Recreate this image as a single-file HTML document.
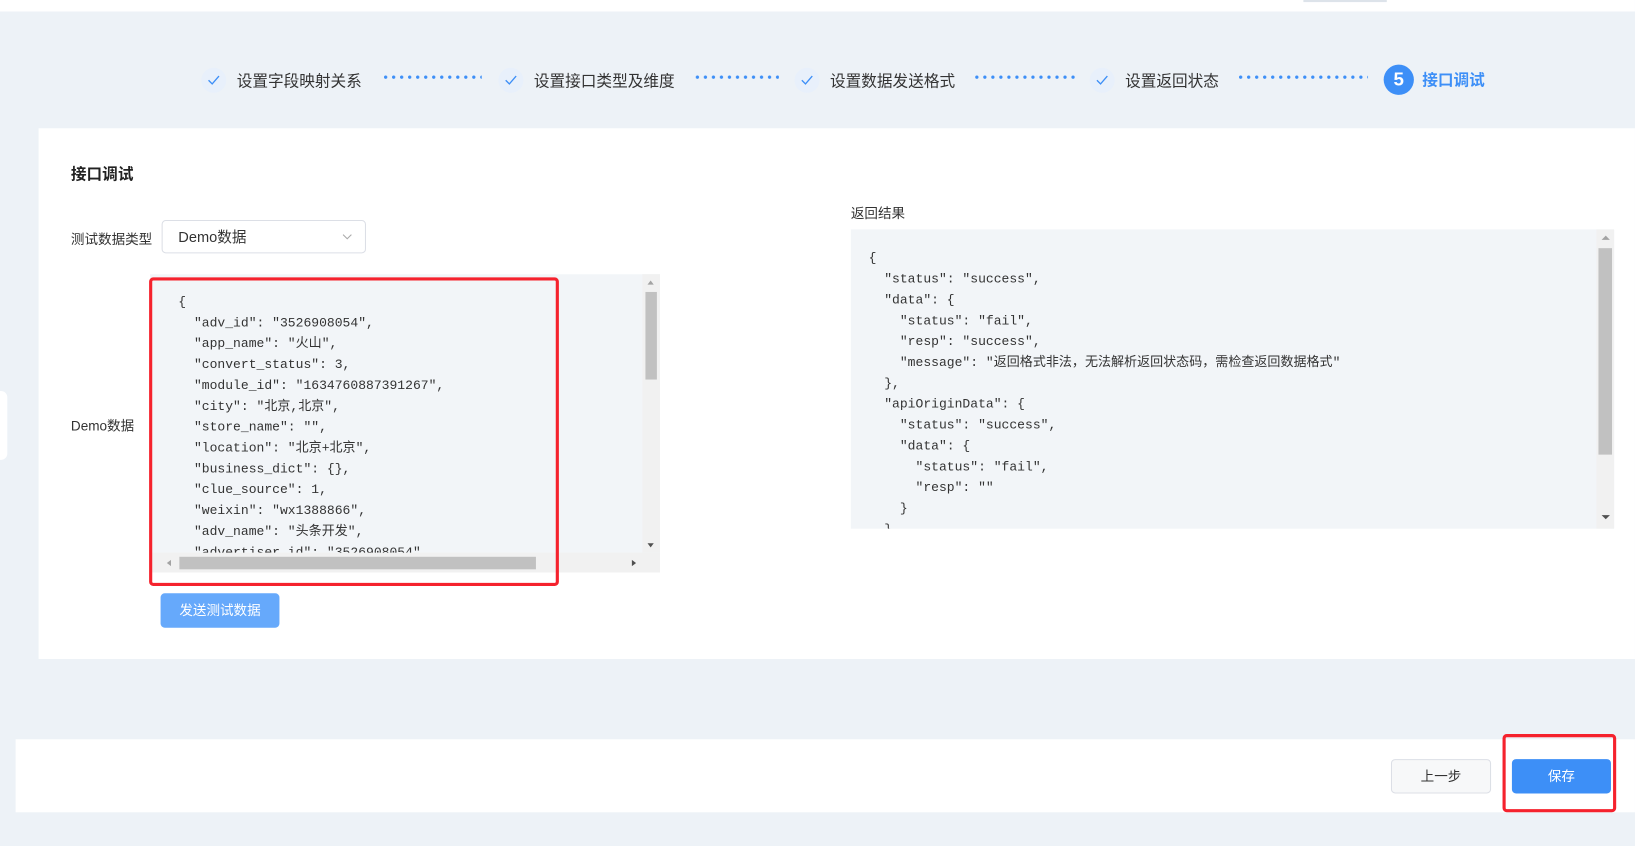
<!DOCTYPE html>
<html><head><meta charset="utf-8"><style>
*{box-sizing:border-box;margin:0;padding:0}
body{width:1635px;height:845px;background:#edf2f7;font-family:"Liberation Sans","Noto Sans CJK SC",sans-serif;position:relative;overflow:hidden;color:#333}
#w{position:absolute;left:0;top:0;width:1568px;height:811px;transform:scale(1.0427);transform-origin:0 0}
.abs{position:absolute}
.top{left:0;top:0;width:1568px;height:11px;background:#fff}
.step{top:65px;height:24px;display:flex;align-items:center;font-size:15px;color:#333}
.chk{width:24px;height:24px;border-radius:50%;background:#e8f0fb;display:inline-flex;align-items:center;justify-content:center;margin-right:10px}
.dots{top:71px;height:6px;background-image:radial-gradient(circle,#3d8ff7 1.4px,transparent 1.8px);background-size:7.7px 6px;background-repeat:repeat-x}
.card{left:37px;top:123px;width:1531px;height:509px;background:#fff}
.code{background:#f2f5f8;font-family:"Liberation Mono","Noto Sans CJK SC",monospace;font-size:12.5px;line-height:20px;color:#333;white-space:pre;overflow:hidden}
.bar{left:15px;top:709px;width:1553px;height:70px;background:#fff}
</style></head><body><div id="w">
<div class="abs top"></div>
<div class="abs" style="left:1250px;top:0;width:80px;height:2px;background:#dde3ea"></div>

<div class="abs step" style="left:193px"><span class="chk"><svg width="12" height="10" viewBox="0 0 12 10"><path d="M1 5l3.5 3.5L11 1" fill="none" stroke="#3d8ff7" stroke-width="1.3"/></svg></span>设置字段映射关系</div>
<div class="abs dots" style="left:366px;width:96px"></div>
<div class="abs step" style="left:478px"><span class="chk"><svg width="12" height="10" viewBox="0 0 12 10"><path d="M1 5l3.5 3.5L11 1" fill="none" stroke="#3d8ff7" stroke-width="1.3"/></svg></span>设置接口类型及维度</div>
<div class="abs dots" style="left:665px;width:82px"></div>
<div class="abs step" style="left:762px"><span class="chk"><svg width="12" height="10" viewBox="0 0 12 10"><path d="M1 5l3.5 3.5L11 1" fill="none" stroke="#3d8ff7" stroke-width="1.3"/></svg></span>设置数据发送格式</div>
<div class="abs dots" style="left:933px;width:98px"></div>
<div class="abs step" style="left:1045px"><span class="chk"><svg width="12" height="10" viewBox="0 0 12 10"><path d="M1 5l3.5 3.5L11 1" fill="none" stroke="#3d8ff7" stroke-width="1.3"/></svg></span>设置返回状态</div>
<div class="abs dots" style="left:1186px;width:126px"></div>
<div class="abs step" style="left:1327px;top:61px;height:30px"><span style="width:29px;height:29px;border-radius:50%;background:#3d8ff7;color:#fff;font-weight:bold;font-size:18px;display:inline-flex;align-items:center;justify-content:center;margin-right:8px">5</span><span style="color:#3d8ff7;font-size:15px;font-weight:bold">接口调试</span></div>

<div class="abs" style="left:0;top:375px;width:7px;height:66px;background:#fff;border-radius:0 6px 6px 0"></div>

<div class="abs card"></div>
<div class="abs" style="left:68px;top:156px;font-size:15px;font-weight:bold;color:#222">接口调试</div>
<div class="abs" style="left:68px;top:219px;font-size:13px;color:#333">测试数据类型</div>
<div class="abs" style="left:155px;top:211px;width:196px;height:32px;border:1px solid #dcdfe6;border-radius:4px;background:#fff;font-size:14px;padding-left:15px;line-height:30px">Demo数据<svg class="abs" style="right:12px;top:12px" width="10" height="6" viewBox="0 0 10 6"><path d="M1 1l4 4 4-4" fill="none" stroke="#aaa"/></svg></div>
<div class="abs" style="left:68px;top:398px;font-size:13px;color:#333">Demo数据</div>

<div class="abs code" style="left:144px;top:263px;width:489px;height:286px;padding:17px 0 0 27px">{
  "adv_id": "3526908054",
  "app_name": "火山",
  "convert_status": 3,
  "module_id": "1634760887391267",
  "city": "北京,北京",
  "store_name": "",
  "location": "北京+北京",
  "business_dict": {},
  "clue_source": 1,
  "weixin": "wx1388866",
  "adv_name": "头条开发",
  "advertiser_id": "3526908054"
</div>
<div class="abs" style="left:144px;top:530px;width:489px;height:19px;background:#f1f1f1"></div>
<div class="abs" style="left:172px;top:534px;width:342px;height:12px;background:#c1c1c1"></div>
<div class="abs" style="left:160px;top:537px;width:0;height:0;border:3px solid transparent;border-right:4px solid #a3a3a3;border-left:0"></div>
<div class="abs" style="left:606px;top:537px;width:0;height:0;border:3px solid transparent;border-left:4px solid #505050;border-right:0"></div>
<div class="abs" style="left:616px;top:263px;width:17px;height:267px;background:#f1f1f1"></div>
<div class="abs" style="left:619px;top:280px;width:11px;height:84px;background:#c1c1c1"></div>
<div class="abs" style="left:621px;top:269px;border:3px solid transparent;border-bottom:4px solid #a3a3a3;border-top:0"></div>
<div class="abs" style="left:621px;top:521px;border:3px solid transparent;border-top:4px solid #505050;border-bottom:0"></div>
<div class="abs" style="left:143px;top:266px;width:393px;height:296px;border:3px solid #f5222d;border-radius:4px"></div>

<div class="abs" style="left:154px;top:569px;width:114px;height:33px;background:#66a9fb;border-radius:4px;color:#fff;font-size:13px;text-align:center;line-height:33px">发送测试数据</div>

<div class="abs" style="left:816px;top:194px;font-size:13px;color:#333">返回结果</div>
<div class="abs code" style="left:816px;top:220px;width:732px;height:287px;padding:18px 0 0 17px">{
  "status": "success",
  "data": {
    "status": "fail",
    "resp": "success",
    "message": "返回格式非法，无法解析返回状态码，需检查返回数据格式"
  },
  "apiOriginData": {
    "status": "success",
    "data": {
      "status": "fail",
      "resp": ""
    }
  }</div>
<div class="abs" style="left:1531px;top:220px;width:17px;height:287px;background:#f1f1f1"></div>
<div class="abs" style="left:1533px;top:238px;width:13px;height:198px;background:#c1c1c1"></div>
<div class="abs" style="left:1536px;top:226px;border:4px solid transparent;border-bottom:4px solid #a3a3a3;border-top:0"></div>
<div class="abs" style="left:1536px;top:494px;border:4px solid transparent;border-top:4px solid #505050;border-bottom:0"></div>

<div class="abs bar"></div>
<div class="abs" style="left:1334px;top:728px;width:96px;height:33px;border:1px solid #dcdfe6;border-radius:4px;background:#f7f8f9;font-size:13px;text-align:center;line-height:31px;color:#333">上一步</div>
<div class="abs" style="left:1450px;top:728px;width:95px;height:33px;border-radius:4px;background:#3d8ff7;font-size:13px;text-align:center;line-height:33px;color:#fff">保存</div>
<div class="abs" style="left:1441px;top:704px;width:109px;height:75px;border:3px solid #f5222d;border-radius:4px"></div>
</div></body></html>
